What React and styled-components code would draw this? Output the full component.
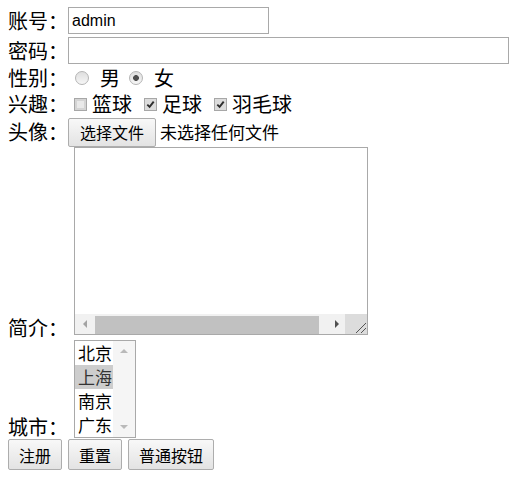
import React from "react";
import styled, { createGlobalStyle } from "styled-components";

const GlobalStyle = createGlobalStyle`
  body {
    margin: 0;
    background: #fff;
  }
`;

const Form = styled.form`
  display: flex;
  flex-direction: column;
  padding: 7px 8px 0;
  font-family: "Noto Sans CJK SC", "Liberation Sans", sans-serif;
  font-size: 20px;
  color: #000;
`;

const Row = styled.div`
  display: flex;
  align-items: ${(p) => (p.$bottom ? "flex-end" : "center")};
  height: ${(p) => (p.$h ? `${p.$h}px` : "auto")};
  margin-top: ${(p) => p.$mt || 0}px;
`;

const Label = styled.span`
  flex: none;
  width: 60px;
  line-height: 24px;
  white-space: nowrap;
`;

const TextInput = styled.input`
  box-sizing: border-box;
  width: ${(p) => p.$w}px;
  height: 27px;
  margin: 0;
  padding: 0 3px;
  border: 1px solid #a9a9a9;
  font: 16px "Liberation Sans", Arial, sans-serif;
  color: #000;
  outline: none;
`;

const Choice = styled.label`
  display: flex;
  align-items: center;
  line-height: 24px;
  margin-right: ${(p) => p.$gap || 0}px;
`;

const Radio = styled.input.attrs({ type: "radio" })`
  appearance: none;
  box-sizing: border-box;
  width: 14px;
  height: 14px;
  margin: 0 11px 0 7px;
  border: 1px solid #b5b5b5;
  border-radius: 50%;
  background: linear-gradient(#dedede, #f6f6f6);

  &:checked {
    background: radial-gradient(circle, #4f4f4f 0 2.6px, transparent 3.2px),
      linear-gradient(#dedede, #f6f6f6);
  }
`;

const Box = styled.span`
  box-sizing: border-box;
  flex: none;
  display: flex;
  align-items: center;
  justify-content: center;
  width: 13px;
  height: 13px;
  margin: 0 5px 0 ${(p) => p.$ml}px;
  border: 1px solid #a7a7a7;
  background: ${(p) => (p.$checked ? "#dcdcdc" : "#e9e9e9")};
  box-shadow: ${(p) => (p.$checked ? "none" : "inset 0 0 0 2px #d4d4d4")};
`;

const CheckBox = ({ checked, ml = 5 }) => (
  <Box $checked={checked} $ml={ml}>
    {checked && (
      <svg width="9" height="9" viewBox="0 0 9 9">
        <path d="M1.3 4.6 L3.6 6.9 L7.7 1.6" stroke="#2e2e2e" strokeWidth="1.9" fill="none" />
      </svg>
    )}
  </Box>
);

const Button = styled.button`
  box-sizing: border-box;
  height: ${(p) => p.$h || 31}px;
  margin: 0;
  padding: 0 ${(p) => p.$px || 10}px;
  border: 1px solid #adadad;
  border-radius: 2px;
  background: linear-gradient(#f8f8f8, #e3e3e3);
  font: 16px "Noto Sans CJK SC", sans-serif;
  color: #000;
  line-height: 1;
`;

const FileName = styled.span`
  margin-left: 4px;
  font-size: 17px;
  line-height: 24px;
`;

const AreaBox = styled.div`
  box-sizing: border-box;
  display: flex;
  flex-direction: column;
  width: 294px;
  height: 188px;
  margin: 0 0 5px 6px;
  border: 1px solid #a9a9a9;
  background: #fff;
`;

const Area = styled.textarea`
  flex: 1;
  margin: 0;
  padding: 2px;
  border: none;
  outline: none;
  resize: none;
  overflow: hidden;
  font: 16px "Noto Sans CJK SC", sans-serif;
`;

const HScroll = styled.div`
  display: flex;
  height: 20px;
  background: #f1f1f1;
`;

const ArrowCell = styled.div`
  flex: none;
  display: flex;
  align-items: center;
  justify-content: center;
  width: ${(p) => p.$w}px;
  height: ${(p) => p.$h || "auto"};
`;

const Thumb = styled.div`
  flex: none;
  width: 224px;
  margin-top: 2px;
  background: #c1c1c1;
`;

const Track = styled.div`
  flex: 1;
`;

const Corner = styled.div`
  flex: none;
  display: flex;
  align-items: flex-end;
  justify-content: flex-end;
  width: 22px;
  background: #dcdcdc;
`;

const ListBox = styled.div`
  box-sizing: border-box;
  display: flex;
  width: 62px;
  height: 98px;
  margin: 0 0 1px 6px;
  border: 1px solid #a9a9a9;
  background: #fff;
`;

const Options = styled.div`
  width: 38px;
  display: flex;
  flex-direction: column;
`;

const Option = styled.div`
  height: 24px;
  padding-left: 3px;
  font-size: 17px;
  line-height: 24px;
  white-space: nowrap;
  background: ${(p) => (p.$selected ? "#cdcdcd" : "transparent")};
  color: ${(p) => (p.$selected ? "#333" : "#000")};
`;

const VScroll = styled.div`
  flex: 1;
  display: flex;
  flex-direction: column;
  justify-content: space-between;
  background: #f5f5f5;
`;

const ButtonRow = styled.div`
  display: flex;
  gap: 6px;
`;

const Tri = ({ dir, color }) => {
  const d = {
    left: "M5 0 L5 8 L1 4 Z",
    right: "M1 0 L1 8 L5 4 Z",
    up: "M0 5 L8 5 L4 1 Z",
    down: "M0 1 L8 1 L4 5 Z",
  }[dir];
  const horiz = dir === "left" || dir === "right";
  return (
    <svg width={horiz ? 6 : 8} height={horiz ? 8 : 6} viewBox={horiz ? "0 0 6 8" : "0 0 8 6"}>
      <path d={d} fill={color} />
    </svg>
  );
};

const Grip = () => (
  <svg width="14" height="14" viewBox="0 0 14 14">
    <path d="M13 3 L3 13 M13 8 L8 13" stroke="#555" strokeWidth="1" />
  </svg>
);

export default function App() {
  return (
    <>
      <GlobalStyle />
      <Form onSubmit={(e) => e.preventDefault()}>
        <Row $h={27}>
          <Label>账号：</Label>
          <TextInput $w={201} defaultValue="admin" />
        </Row>
        <Row $h={27} $mt={3}>
          <Label>密码：</Label>
          <TextInput $w={441} type="password" />
        </Row>
        <Row $h={27}>
          <Label>性别：</Label>
          <Choice $gap={2}>
            <Radio name="sex" />男
          </Choice>
          <Choice>
            <Radio name="sex" defaultChecked />女
          </Choice>
        </Row>
        <Row $h={26}>
          <Label>兴趣：</Label>
          <Choice $gap={7}>
            <CheckBox ml={6} />篮球
          </Choice>
          <Choice $gap={7}>
            <CheckBox checked />足球
          </Choice>
          <Choice>
            <CheckBox checked />羽毛球
          </Choice>
        </Row>
        <Row $h={30}>
          <Label>头像：</Label>
          <Button type="button" $h={29} $px={11}>
            选择文件
          </Button>
          <FileName>未选择任何文件</FileName>
        </Row>
        <Row $bottom>
          <Label>简介：</Label>
          <AreaBox>
            <Area />
            <HScroll>
              <ArrowCell $w={20}>
                <Tri dir="left" color="#a3a3a3" />
              </ArrowCell>
              <Thumb />
              <Track />
              <ArrowCell $w={17}>
                <Tri dir="right" color="#505050" />
              </ArrowCell>
              <Corner>
                <Grip />
              </Corner>
            </HScroll>
          </AreaBox>
        </Row>
        <Row $bottom>
          <Label>城市：</Label>
          <ListBox>
            <Options>
              <Option>北京</Option>
              <Option $selected>上海</Option>
              <Option>南京</Option>
              <Option>广东</Option>
            </Options>
            <VScroll>
              <ArrowCell $w={21} $h="20px">
                <Tri dir="up" color="#b9b9b9" />
              </ArrowCell>
              <ArrowCell $w={21} $h="20px">
                <Tri dir="down" color="#b9b9b9" />
              </ArrowCell>
            </VScroll>
          </ListBox>
        </Row>
        <ButtonRow>
          <Button type="submit">注册</Button>
          <Button type="reset">重置</Button>
          <Button type="button">普通按钮</Button>
        </ButtonRow>
      </Form>
    </>
  );
}
